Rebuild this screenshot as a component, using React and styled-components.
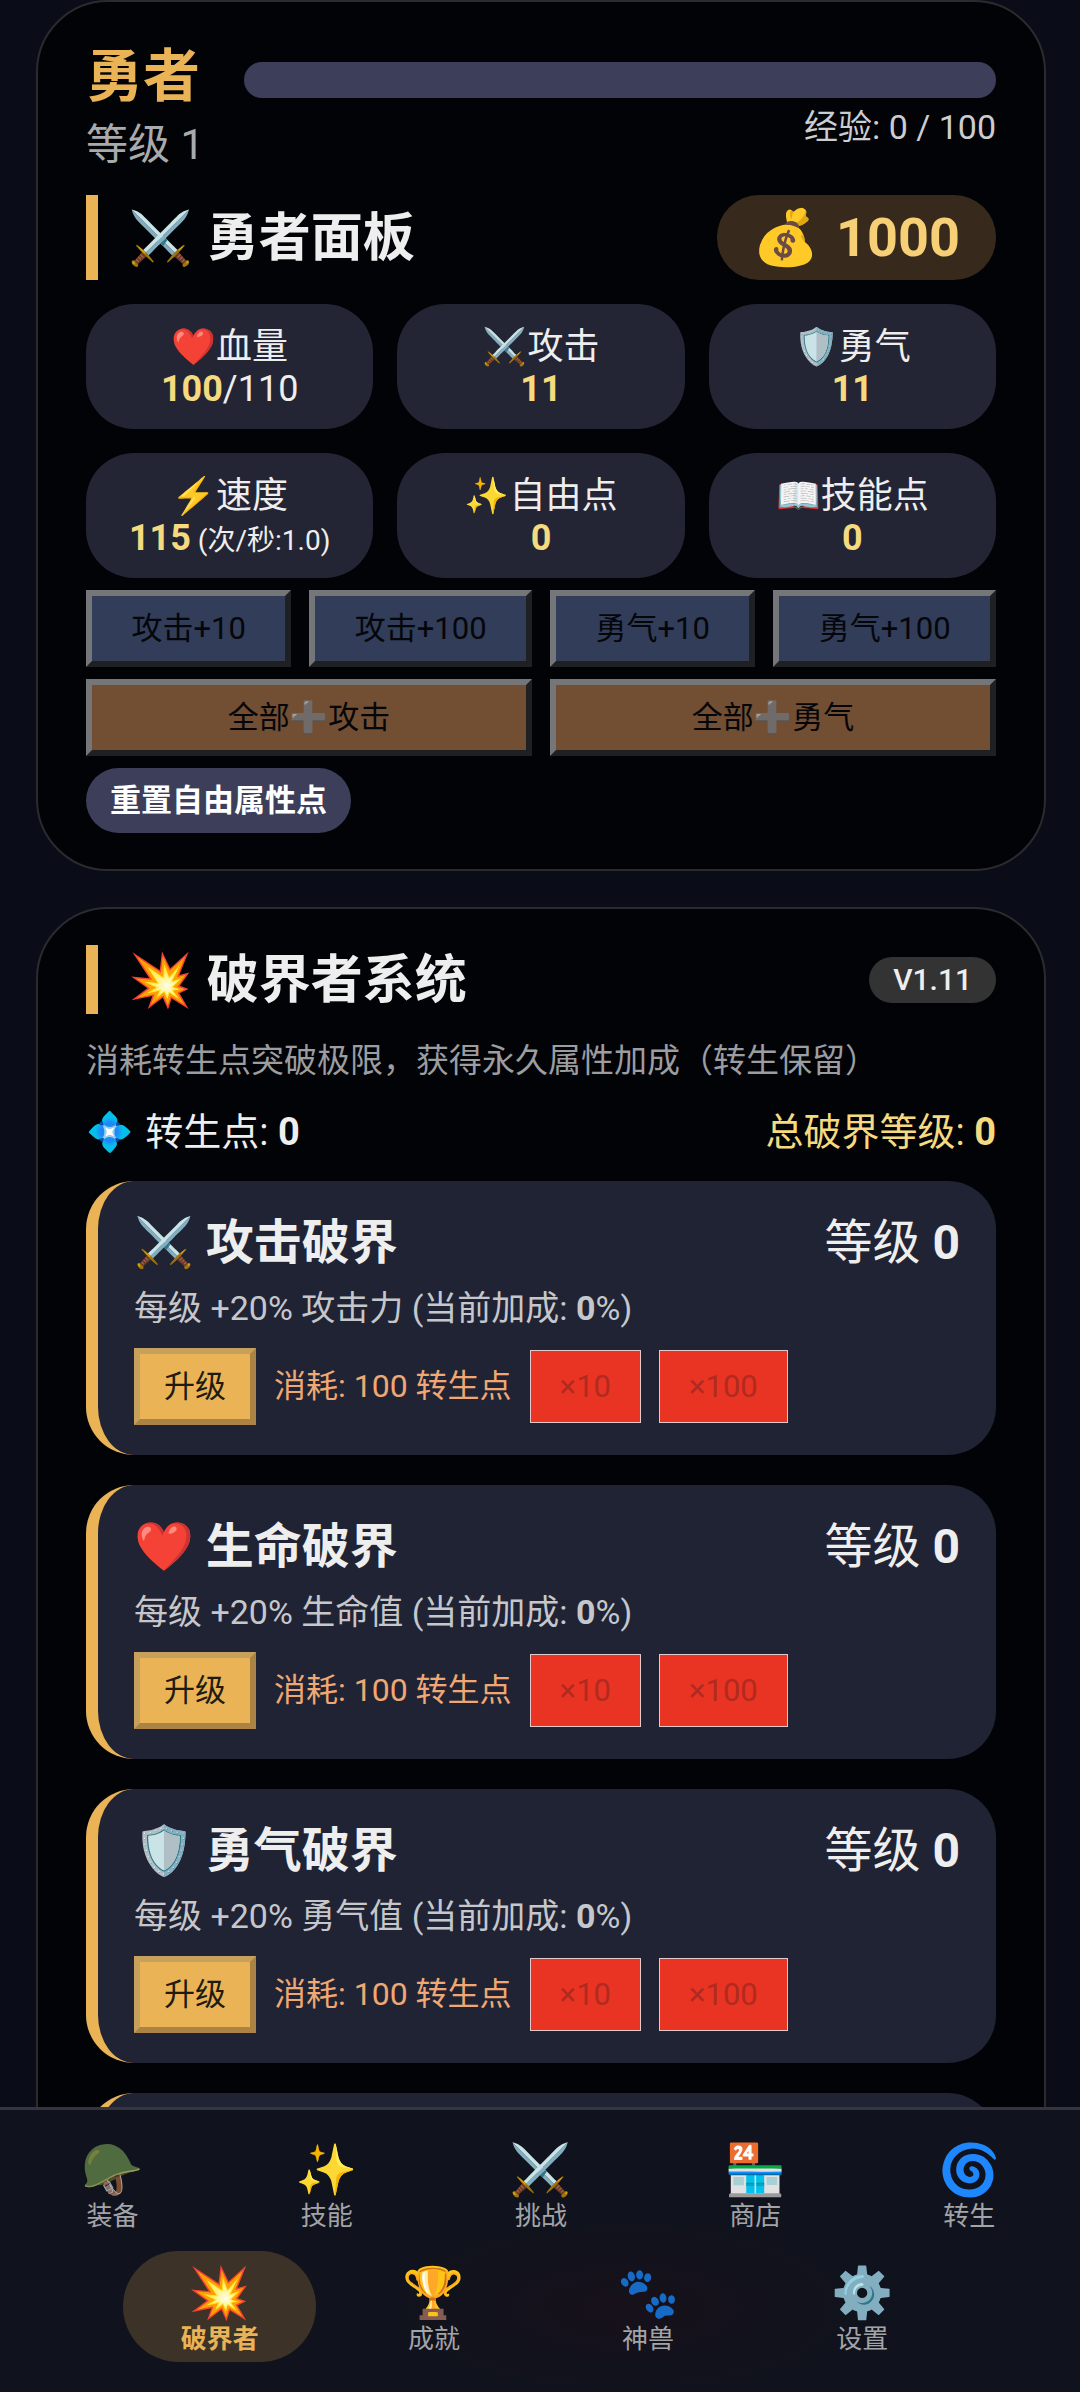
import React from "react";
import styled, { createGlobalStyle } from "styled-components";

const GlobalStyle = createGlobalStyle`
  * { box-sizing: border-box; }
  body {
    margin: 0;
    background: #0a0d18;
    color: #eeeeee;
    font-family: Roboto, "Noto Sans CJK SC", "Noto Color Emoji", sans-serif;
  }
  h1, h2, h3, p, dl, dt, dd, ul { margin: 0; padding: 0; font-size: inherit; }
  button { font-family: inherit; margin: 0; }
`;

const Shell = styled.div`
  display: flex;
  flex-direction: column;
  height: 100vh;
`;

const Main = styled.main`
  flex: 1;
  min-height: 0;
  overflow: hidden auto;
  scrollbar-width: none;
  padding: 0 34px 0 36px;
  display: flex;
  flex-direction: column;
  gap: 36px;
`;

const Panel = styled.section`
  flex-shrink: 0;
  background: #020307;
  border: 2px solid #2a2b2f;
  border-radius: 72px;
  padding: 36px 48px;
`;

const Row = styled.div`
  display: flex;
  align-items: center;
  justify-content: space-between;
`;

const HeroRow = styled.header`
  display: flex;
  align-items: center;
  gap: 40px;
`;

const HeroName = styled.h1`
  font-size: 57px;
  line-height: 78px;
  font-weight: 700;
  color: #e9b356;
`;

const HeroLevel = styled.p`
  font-size: 42px;
  line-height: 58px;
  color: #a9aaac;
`;

const ExpColumn = styled.div`
  flex: 1;
  display: flex;
  flex-direction: column;
  gap: 6px;
`;

const ExpTrack = styled.div`
  height: 36px;
  border-radius: 18px;
  background: #3d3e5a;
`;

const ExpText = styled.p`
  font-size: 34px;
  line-height: 46px;
  text-align: right;
  color: #cccdcf;
`;

const SectionHead = styled(Row)`
  margin: ${(p) => p.$top || 0}px 0 24px;
`;

const SectionTitle = styled.h2`
  align-self: stretch;
  display: flex;
  align-items: center;
  gap: 14px;
  border-left: 12px solid #e9b356;
  padding: 2px 0 0 30px;
  font-size: 52px;
  line-height: 67px;
  font-weight: 700;
`;

const GoldPill = styled.div`
  display: flex;
  gap: 16px;
  border-radius: 42px;
  padding: 6px 36px;
  background: #372a1c;
  color: #f6cf76;
  font-size: 54px;
  line-height: 73px;
  font-weight: 700;
`;

const Stats = styled.dl`
  display: grid;
  grid-template-columns: repeat(3, 1fr);
  gap: 24px;
`;

const Stat = styled.div`
  border-radius: 48px;
  background: #242534;
  padding: 22px 12px 19px;
  text-align: center;
  font-size: 36px;
  line-height: 42px;
  white-space: nowrap;

  b { color: #f5da80; }
  small { font-size: 28px; line-height: 1; }
`;

const ButtonRow = styled.div`
  display: flex;
  gap: 18px;
  margin-top: 12px;
`;

const PointButton = styled.button`
  flex: ${(p) => (p.$wide ? "1 1 0" : "1 1 auto")};
  border: 6px solid;
  border-color: #757678 #1f2021 #1f2021 #757678;
  background: ${(p) => (p.$wide ? "#724e33" : "#313d59")};
  color: #05060a;
  font-size: 31px;
  line-height: 41px;
  padding: 12px 30px;
`;

const PlusIcon = styled.span`
  filter: grayscale(0.6) brightness(1.15);
  opacity: 0.85;
`;

const ResetButton = styled.button`
  display: block;
  margin-top: 12px;
  border: 0;
  border-radius: 33px;
  padding: 12px 24px;
  background: #3d3e5a;
  color: #ffffff;
  font-size: 31px;
  line-height: 41px;
  font-weight: 700;
`;

const Version = styled.span`
  border-radius: 24px;
  padding: 3px 24px;
  background: #333333;
  font-size: 30px;
  line-height: 40px;
  font-weight: 500;
`;

const Intro = styled.p`
  font-size: 33px;
  line-height: 46px;
  color: #9c9da0;
`;

const Totals = styled(Row)`
  margin: 22px 0 23px;
  font-size: 38px;
  line-height: 52px;
`;

const Points = styled.span`
  display: flex;
  gap: 12px;
`;

const Accent = styled.span`
  color: #f5da80;
`;

const UpgradeList = styled.ul`
  list-style: none;
  display: flex;
  flex-direction: column;
  gap: 30px;
`;

const UpgradeCard = styled.li`
  min-height: 274px;
  border-left: 12px solid #e9b356;
  border-radius: 48px;
  background: #202333;
  padding: 30px 36px;
`;

const UpgradeHead = styled(Row)`
  font-size: 48px;
  line-height: 63px;
`;

const UpgradeName = styled.h3`
  display: flex;
  gap: 12px;
`;

const UpgradeText = styled.p`
  margin: 12px 0 18px;
  font-size: 34px;
  line-height: 44px;
  color: #c6c7cb;
`;

const Actions = styled.div`
  display: flex;
  align-items: center;
  gap: 18px;
`;

const UpgradeButton = styled.button`
  border: 6px solid;
  border-color: #c6a05c #ab8445 #ab8445 #c6a05c;
  background: #e9b356;
  color: #201a10;
  font-size: 31px;
  line-height: 41px;
  padding: 12px 24px;
`;

const BulkButton = styled.button`
  border: 1px solid #e4c9cc;
  background: #e93424;
  color: #b02a20;
  font-size: 31px;
  line-height: 41px;
  padding: 15px 29px;
`;

const Cost = styled.span`
  color: #efa873;
  font-size: 32px;
  line-height: 41px;
`;

const Nav = styled.nav`
  flex-shrink: 0;
  display: flex;
  flex-wrap: wrap;
  justify-content: center;
  gap: 12px 21px;
  border-top: 3px solid #33363f;
  padding: 18px 14px 30px 16px;
  background: radial-gradient(ellipse 240px 90px at 58% 70%, #17111b, #10131d);
`;

const Tab = styled.button`
  width: calc((100% - 84px) / 5);
  border: 0;
  border-radius: 56px;
  padding: 12px 0 7px;
  background: ${(p) => (p.$active ? "#3c3228" : "transparent")};
  color: ${(p) => (p.$active ? "#e9b356" : "#a3a4a8")};
  font-weight: ${(p) => (p.$active ? 700 : 400)};
  font-size: 26px;
  line-height: 32px;
`;

const TabIcon = styled.span`
  display: block;
  font-size: 50px;
  line-height: 60px;
`;

const stats = [
  { icon: "❤️", label: "血量", value: "100", rest: "/110" },
  { icon: "⚔️", label: "攻击", value: "11" },
  { icon: "🛡️", label: "勇气", value: "11" },
  { icon: "⚡", label: "速度", value: "115", note: "(次/秒:1.0)" },
  { icon: "✨", label: "自由点", value: "0" },
  { icon: "📖", label: "技能点", value: "0" },
];

const upgrades = [
  { icon: "⚔️", name: "攻击破界", gain: "攻击力" },
  { icon: "❤️", name: "生命破界", gain: "生命值" },
  { icon: "🛡️", name: "勇气破界", gain: "勇气值" },
];

const tabs = [
  { icon: "🪖", label: "装备" },
  { icon: "✨", label: "技能" },
  { icon: "⚔️", label: "挑战" },
  { icon: "🏪", label: "商店" },
  { icon: "🌀", label: "转生" },
  { icon: "💥", label: "破界者", active: true },
  { icon: "🏆", label: "成就" },
  { icon: "🐾", label: "神兽" },
  { icon: "⚙️", label: "设置" },
];

function HeroPanel() {
  return (
    <Panel>
      <HeroRow>
        <div>
          <HeroName>勇者</HeroName>
          <HeroLevel>等级 1</HeroLevel>
        </div>
        <ExpColumn>
          <ExpTrack />
          <ExpText>经验: 0 / 100</ExpText>
        </ExpColumn>
      </HeroRow>
      <SectionHead $top={21}>
        <SectionTitle><span>⚔️</span><span>勇者面板</span></SectionTitle>
        <GoldPill><span>💰</span><span>1000</span></GoldPill>
      </SectionHead>
      <Stats>
        {stats.map((s) => (
          <Stat key={s.label}>
            <dt>{s.icon}{s.label}</dt>
            <dd>
              <b>{s.value}</b>{s.rest}
              {s.note && <small> {s.note}</small>}
            </dd>
          </Stat>
        ))}
      </Stats>
      <ButtonRow>
        <PointButton disabled>攻击+10</PointButton>
        <PointButton disabled>攻击+100</PointButton>
        <PointButton disabled>勇气+10</PointButton>
        <PointButton disabled>勇气+100</PointButton>
      </ButtonRow>
      <ButtonRow>
        <PointButton $wide disabled>全部<PlusIcon>➕</PlusIcon>攻击</PointButton>
        <PointButton $wide disabled>全部<PlusIcon>➕</PlusIcon>勇气</PointButton>
      </ButtonRow>
      <ResetButton>重置自由属性点</ResetButton>
    </Panel>
  );
}

function BreakerPanel() {
  return (
    <Panel>
      <SectionHead>
        <SectionTitle><span>💥</span><span>破界者系统</span></SectionTitle>
        <Version>V1.11</Version>
      </SectionHead>
      <Intro>消耗转生点突破极限，获得永久属性加成（转生保留）</Intro>
      <Totals>
        <Points><span>💠</span><span>转生点: <b>0</b></span></Points>
        <Accent>总破界等级: <b>0</b></Accent>
      </Totals>
      <UpgradeList>
        {upgrades.map((u) => (
          <UpgradeCard key={u.name}>
            <UpgradeHead>
              <UpgradeName><span>{u.icon}</span><span>{u.name}</span></UpgradeName>
              <span>等级 <b>0</b></span>
            </UpgradeHead>
            <UpgradeText>每级 +20% {u.gain} (当前加成: <b>0</b>%)</UpgradeText>
            <Actions>
              <UpgradeButton>升级</UpgradeButton>
              <Cost>消耗: 100 转生点</Cost>
              <BulkButton disabled>×10</BulkButton>
              <BulkButton disabled>×100</BulkButton>
            </Actions>
          </UpgradeCard>
        ))}
        <UpgradeCard aria-hidden="true" />
      </UpgradeList>
    </Panel>
  );
}

export default function App() {
  return (
    <Shell>
      <GlobalStyle />
      <Main>
        <HeroPanel />
        <BreakerPanel />
      </Main>
      <Nav>
        {tabs.map((t) => (
          <Tab key={t.label} $active={t.active}>
            <TabIcon>{t.icon}</TabIcon>
            {t.label}
          </Tab>
        ))}
      </Nav>
    </Shell>
  );
}
